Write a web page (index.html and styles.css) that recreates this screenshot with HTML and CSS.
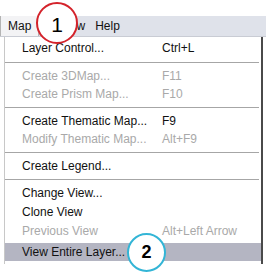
FILE: index.html
```html
<!DOCTYPE html>
<html lang="en">
<head>
    <meta charset="UTF-8">
    <title>Map menu</title>
    <link rel="stylesheet" href="styles.css">
</head>
<body>
    <div class="screen">
        <div class="menubar">
            <div class="menubar-item active">Map</div>
            <div class="menubar-item middle">View</div>
            <div class="menubar-item">Help</div>
        </div>

        <div class="dropdown">
            <div class="item"><span class="label">Layer Control...</span><span class="key">Ctrl+L</span></div>
            <div class="sep"></div>
            <div class="item disabled"><span class="label">Create 3DMap...</span><span class="key">F11</span></div>
            <div class="item disabled"><span class="label">Create Prism Map...</span><span class="key">F10</span></div>
            <div class="sep short"></div>
            <div class="item"><span class="label">Create Thematic Map...</span><span class="key">F9</span></div>
            <div class="item disabled"><span class="label">Modify Thematic Map...</span><span class="key">Alt+F9</span></div>
            <div class="sep short"></div>
            <div class="item"><span class="label">Create Legend...</span></div>
            <div class="sep short"></div>
            <div class="item tall"><span class="label">Change View...</span></div>
            <div class="item tall"><span class="label">Clone View</span></div>
            <div class="item tall disabled"><span class="label">Previous View</span><span class="key">Alt+Left Arrow</span></div>
            <div class="item selected"><span class="label">View Entire Layer...</span></div>
        </div>

        <div class="callout callout-red">1</div>
        <div class="callout callout-blue">2</div>
    </div>
</body>
</html>
```

FILE: styles.css
```css
body {
    margin: 0;
    padding: 0;
    background: #ffffff;
    font-family: "Liberation Sans", Arial, sans-serif;
    font-size: 12px;
    color: #111111;
}

.screen {
    position: relative;
    width: 266px;
    height: 275px;
    padding-top: 16px;
    box-sizing: border-box;
}

.menubar {
    display: flex;
    height: 20px;
    background: #dfe2ea;
    border-bottom: 1px solid #c9ccd4;
}

.menubar-item {
    padding: 0 10px 0 0;
    line-height: 20px;
}

.menubar-item.active {
    background: #f3f3f5;
    border-left: 1px solid #b4b4b4;
    border-right: 1px solid #b4b4b4;
    padding: 0 7px;
}

.menubar-item.middle {
    padding-left: 20px;
}

.dropdown {
    margin-left: 4px;
    width: 256px;
    background: #ffffff;
    border-left: 1px solid #c8c8c8;
    border-right: 2px solid #4a4a4a;
    padding: 2px 0 3px 0;
}

.item {
    display: flex;
    height: 18px;
    line-height: 18px;
    padding-left: 17px;
}

.item.tall {
    height: 19px;
    line-height: 19px;
}

.label {
    width: 140px;
}

.key {
    color: #111111;
}

.disabled,
.disabled .key {
    color: #a9a9a9;
}

.selected {
    background: #b4b5c2;
    margin-top: 2px;
}

.sep {
    height: 1px;
    background: #a6a6a6;
    margin: 5px 2px 4px 0;
    border-bottom: 0;
}

.sep.short {
    margin: 4px 2px 4px 0;
}

.callout {
    position: absolute;
    box-sizing: border-box;
    border-radius: 50%;
    background: #ffffff;
    display: flex;
    align-items: center;
    justify-content: center;
    color: #000000;
}

.callout-red {
    left: 36px;
    top: 2px;
    width: 42px;
    height: 42px;
    border: 2px solid #d4232b;
    font-size: 21px;
    padding-top: 4px;
}

.callout-blue {
    left: 127px;
    top: 233px;
    width: 39px;
    height: 39px;
    border: 2px solid #33b5d6;
    font-size: 18px;
    font-weight: bold;
}
```
